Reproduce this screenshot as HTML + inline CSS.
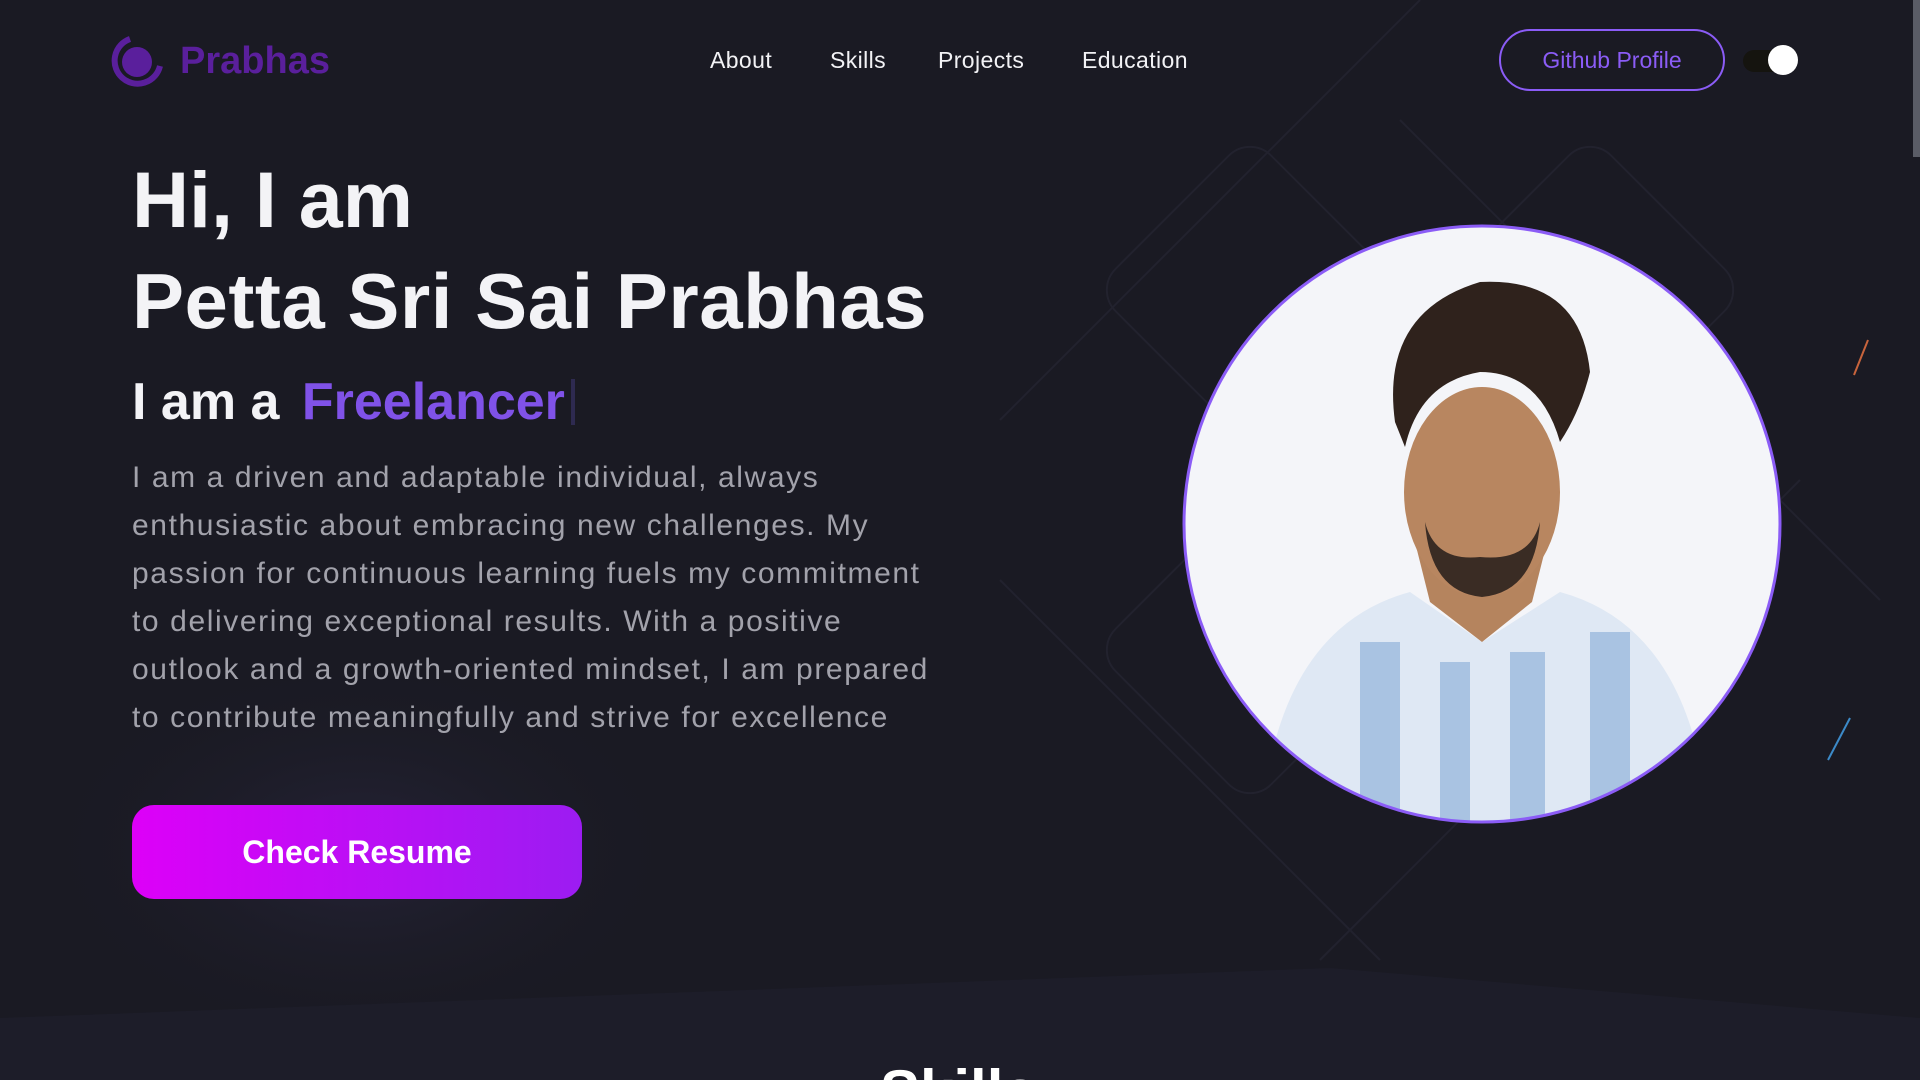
<!DOCTYPE html>
<html><head><meta charset="utf-8"><style>
*{margin:0;padding:0;box-sizing:border-box}
html,body{width:1920px;height:1080px;overflow:hidden;background:#1a1a23;font-family:"Liberation Sans",sans-serif}
#w{position:relative;width:1920px;height:1080px;overflow:hidden}
.abs{position:absolute}
nav a{position:absolute;top:47px;color:#f2f2f5;font-size:23px;font-weight:500;text-decoration:none;letter-spacing:.4px}
.p{color:#a2a2ab;font-size:30px;line-height:48px;letter-spacing:1.6px}
</style></head><body><div id="w">
<svg class="abs" style="left:0;top:0" width="1920" height="1080">
<defs>
<radialGradient id="g1" cx="0.5" cy="0.5" r="0.5"><stop offset="0" stop-color="#2a2740" stop-opacity=".7"/><stop offset="1" stop-color="#1a1a23" stop-opacity="0"/></radialGradient>
</defs>
<ellipse cx="360" cy="850" rx="330" ry="200" fill="url(#g1)"/>
<g fill="none" stroke="#22222e" stroke-width="2">
<rect x="1140" y="180" width="220" height="220" rx="30" transform="rotate(45 1250 290)"/>
<rect x="1480" y="180" width="220" height="220" rx="30" transform="rotate(45 1590 290)"/>
<rect x="1140" y="540" width="220" height="220" rx="30" transform="rotate(45 1250 650)"/>
<line x1="1000" y1="420" x2="1420" y2="0"/>
<line x1="1400" y1="120" x2="1880" y2="600"/>
<line x1="1000" y1="580" x2="1380" y2="960"/>
<line x1="1320" y1="960" x2="1800" y2="480"/>
</g>
<line x1="1854" y1="375" x2="1868" y2="340" stroke="#c8643c" stroke-width="2"/>
<line x1="1828" y1="760" x2="1850" y2="718" stroke="#3c8ac8" stroke-width="2"/>
<path d="M0 1018 L1330 968 L1920 1018 L1920 1080 L0 1080Z" fill="#1d1d29"/>
<rect x="1913" y="0" width="7" height="157" fill="#5a5c66"/>
</svg>
<svg class="abs" style="left:110px;top:33px" width="56" height="56" viewBox="0 0 56 56">
<circle cx="27" cy="29" r="15" fill="#5a1f9c"/>
<path d="M20 6 A23 23 0 1 0 50 33" fill="none" stroke="#5a1f9c" stroke-width="6"/>
</svg>
<div class="abs" style="left:180px;top:40px;font-size:38px;font-weight:700;color:#5a1f9c">Prabhas</div>
<nav><a style="left:710px">About</a><a style="left:830px">Skills</a><a style="left:938px">Projects</a><a style="left:1082px">Education</a></nav>
<div class="abs" style="left:1499px;top:29px;width:226px;height:62px;border:2px solid #8b5cf6;border-radius:31px;color:#8b5cf6;font-size:23px;text-align:center;line-height:58px">Github Profile</div>
<div class="abs" style="left:1743px;top:50px;width:52px;height:22px;border-radius:11px;background:#15140f"></div>
<div class="abs" style="left:1768px;top:45px;width:30px;height:30px;border-radius:50%;background:#fff"></div>
<div class="abs" style="left:132px;top:154px;font-size:79px;font-weight:700;color:#f3f3f6">Hi, I am</div>
<div class="abs" style="left:132px;top:256px;font-size:78px;font-weight:700;color:#f3f3f6;letter-spacing:.5px">Petta Sri Sai Prabhas</div>
<div class="abs" style="left:132px;top:372px;font-size:52px;font-weight:600;color:#f3f3f6">I am a <span style="color:#8052e8;margin-left:8px">Freelancer</span><span style="display:inline-block;width:4px;height:46px;background:#2e2a50;vertical-align:-6px;margin-left:6px"></span></div>
<div class="abs p" style="left:132px;top:454px;width:900px">I am a driven and adaptable individual, always<br>enthusiastic about embracing new challenges. My<br>passion for continuous learning fuels my commitment<br>to delivering exceptional results. With a positive<br>outlook and a growth-oriented mindset, I am prepared<br>to contribute meaningfully and strive for excellence</div>
<div class="abs" style="left:132px;top:805px;width:450px;height:94px;border-radius:22px;background:linear-gradient(90deg,#dd00f8,#9c1cf2);color:#fff;font-size:32px;font-weight:700;text-align:center;line-height:94px">Check Resume</div>
<svg class="abs" style="left:1180px;top:222px" width="604" height="604" viewBox="0 0 604 604">
<defs><clipPath id="c"><circle cx="302" cy="302" r="298"/></clipPath></defs>
<circle cx="302" cy="302" r="298" fill="#f4f5f9"/>
<g clip-path="url(#c)">
<path d="M90 540 Q120 400 230 370 L302 420 L380 370 Q490 400 520 540 L520 620 L90 620Z" fill="#dfe8f4"/>
<rect x="180" y="420" width="40" height="200" fill="#a9c3e2"/><rect x="260" y="440" width="30" height="180" fill="#a9c3e2"/><rect x="330" y="430" width="35" height="190" fill="#a9c3e2"/><rect x="410" y="410" width="40" height="210" fill="#a9c3e2"/>
<path d="M230 300 L250 380 L302 420 L352 380 L372 300Z" fill="#b5845e"/>
<ellipse cx="302" cy="270" rx="78" ry="105" fill="#b88660"/>
<path d="M300 335 Q255 340 245 300 Q250 370 302 375 Q355 370 360 300 Q350 340 300 335Z" fill="#3a2c24"/>
<path d="M215 200 Q200 90 300 60 Q400 55 410 150 Q400 190 380 220 Q360 150 300 150 Q240 160 225 225Z" fill="#2f221c"/>
</g>
<circle cx="302" cy="302" r="298" fill="none" stroke="#8b5cf6" stroke-width="3"/>
</svg>
<div class="abs" style="left:880px;top:1062px;font-size:60px;font-weight:700;color:#fff;line-height:1">Skills</div>
</div></body></html>
